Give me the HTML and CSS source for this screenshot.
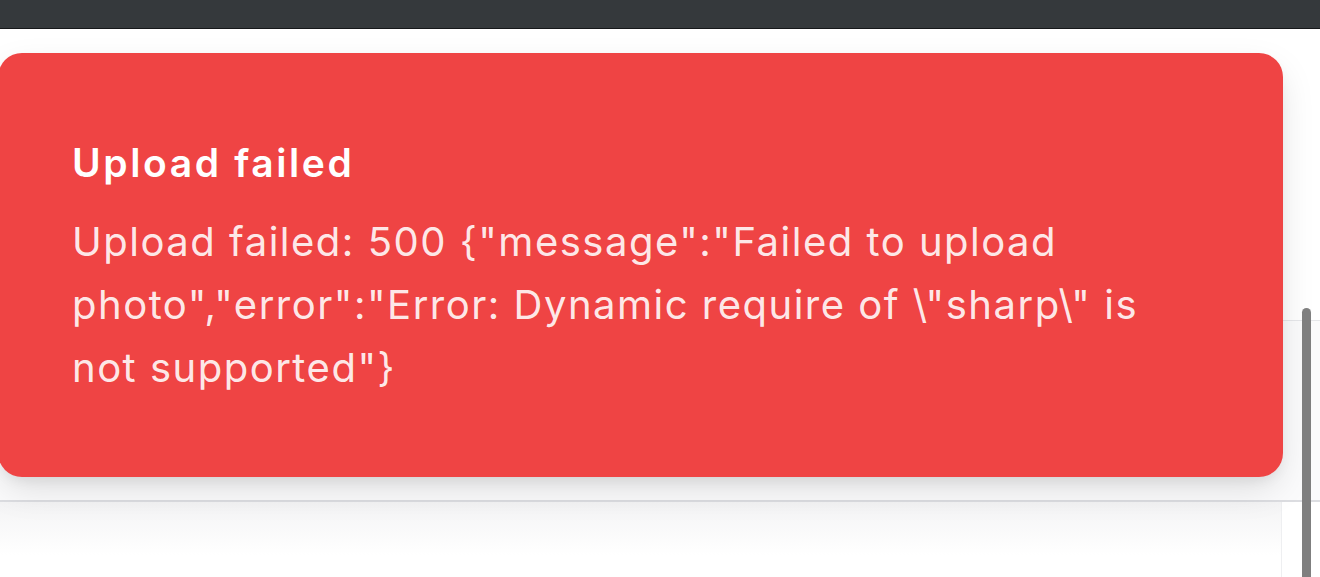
FILE: index.html
```html
<!DOCTYPE html>
<html lang="en">
<head>
<meta charset="utf-8">
<title>Upload failed</title>
<link rel="stylesheet" href="styles.css">
</head>
<body>
<div class="topbar"></div>
<main class="page">
  <div class="spacer"></div>
  <section class="band"></section>
  <section class="card-row">
    <div class="card"></div>
  </section>
  <div class="toast" role="alert">
    <div class="toast-title">Upload failed</div>
    <div class="toast-desc">Upload failed: 500 {"message":"Failed to upload photo","error":"Error: Dynamic require of \"sharp\" is not supported"}</div>
  </div>
  <div class="scrollbar"></div>
</main>
</body>
</html>
```
FILE: styles.css
```css
html, body {
  margin: 0;
  padding: 0;
  height: 100%;
  overflow: hidden;
  background: #ffffff;
  font-family: Inter, "Noto Sans", sans-serif;
}
.topbar {
  height: 28px;
  background: #35393c;
  border-bottom: 1px solid #16181a;
}
.page {
  position: relative;
  height: 548px;
  overflow: hidden;
}
.spacer {
  height: 291px;
}
.band {
  height: 179px;
  border-top: 1px solid #e6e7ea;
  border-bottom: 2px solid #dcdde1;
  background: #fbfbfc;
}
.card-row {
  display: flex;
  height: 76px;
}
.card {
  width: 1281px;
  border-right: 1px solid #eeeff1;
  background: linear-gradient(#f4f4f5, #ffffff 70%);
}
.toast {
  position: absolute;
  left: -2px;
  top: 24px;
  width: 1285px;
  height: 424px;
  box-sizing: border-box;
  padding: 85px 74px 0 74px;
  background: #ef4444;
  border-radius: 24px;
  box-shadow: 0 14px 36px -4px rgba(0,0,0,0.13), 0 6px 14px -4px rgba(0,0,0,0.08);
  color: #ffffff;
}
.toast-title {
  font-size: 39px;
  font-weight: 600;
  letter-spacing: 2.6px;
  line-height: 50px;
}
.toast-desc {
  margin-top: 22px;
  font-size: 40px;
  line-height: 63px;
  letter-spacing: 1.5px;
  color: rgba(255,255,255,0.9);
  max-width: 1100px;
}
.scrollbar {
  position: absolute;
  left: 1302px;
  top: 279px;
  width: 9px;
  height: 300px;
  border-radius: 5px;
  background: #7f7f7f;
}
```
